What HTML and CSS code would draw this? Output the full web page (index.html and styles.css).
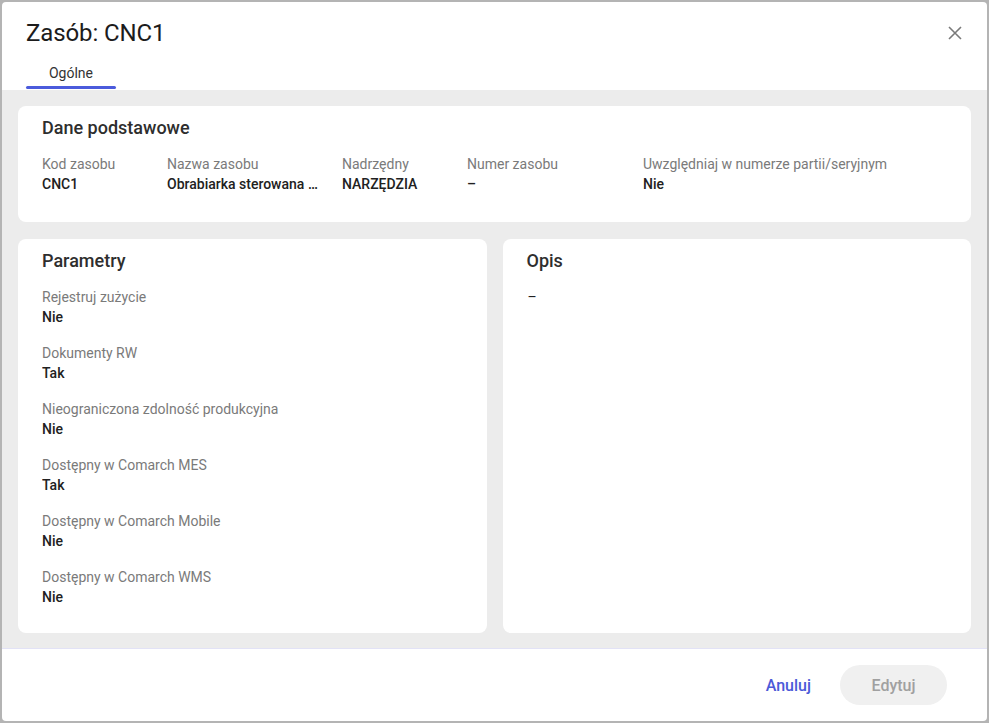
FILE: index.html
```html
<!DOCTYPE html>
<html lang="pl">
<head>
<meta charset="utf-8">
<title>Zasób: CNC1</title>
<link rel="stylesheet" href="styles.css">
</head>
<body>
<div class="dialog">
  <header class="header">
    <div class="title-row">
      <h1 class="title">Zasób: CNC1</h1>
      <button class="close" aria-label="Zamknij">
        <svg width="14" height="14" viewBox="0 0 14 14"><path d="M1 1 L13 13 M13 1 L1 13" stroke="#7a7a7a" stroke-width="1.6" fill="none"/></svg>
      </button>
    </div>
    <div class="tabs">
      <div class="tab active">Ogólne</div>
    </div>
  </header>
  <main class="content">
    <section class="card card-basic">
      <h2 class="card-title">Dane podstawowe</h2>
      <div class="fields">
        <div class="field w1"><div class="label">Kod zasobu</div><div class="value">CNC1</div></div>
        <div class="field w2"><div class="label">Nazwa zasobu</div><div class="value truncated">Obrabiarka sterowana numerycznie</div></div>
        <div class="field w1"><div class="label">Nadrzędny</div><div class="value">NARZĘDZIA</div></div>
        <div class="field w3"><div class="label">Numer zasobu</div><div class="value">–</div></div>
        <div class="field"><div class="label">Uwzględniaj w numerze partii/seryjnym</div><div class="value">Nie</div></div>
      </div>
    </section>
    <div class="row">
      <section class="card">
        <h2 class="card-title">Parametry</h2>
        <div class="list">
          <div class="item"><div class="label">Rejestruj zużycie</div><div class="value">Nie</div></div>
          <div class="item"><div class="label">Dokumenty RW</div><div class="value">Tak</div></div>
          <div class="item"><div class="label">Nieograniczona zdolność produkcyjna</div><div class="value">Nie</div></div>
          <div class="item"><div class="label">Dostępny w Comarch MES</div><div class="value">Tak</div></div>
          <div class="item"><div class="label">Dostępny w Comarch Mobile</div><div class="value">Nie</div></div>
          <div class="item"><div class="label">Dostępny w Comarch WMS</div><div class="value">Nie</div></div>
        </div>
      </section>
      <section class="card">
        <h2 class="card-title">Opis</h2>
        <div class="list">
          <div class="value plain">–</div>
        </div>
      </section>
    </div>
  </main>
  <footer class="footer">
    <button class="btn btn-text">Anuluj</button>
    <button class="btn btn-disabled">Edytuj</button>
  </footer>
</div>
</body>
</html>
```

FILE: styles.css
```css
* { box-sizing: border-box; }
html, body { margin: 0; padding: 0; }
body {
  background: #b4b4b4;
  padding: 2px;
  font-family: Roboto, "Liberation Sans", Arial, sans-serif;
  color: #212121;
}
.dialog {
  width: 985px;
  height: 719px;
  background: #fff;
  border-radius: 4px;
  display: flex;
  flex-direction: column;
  overflow: hidden;
}
.header { padding: 15px 20px 0 24px; }
.title-row {
  display: flex;
  align-items: center;
  justify-content: space-between;
  height: 32px;
}
.title {
  margin: 0;
  font-size: 24px;
  font-weight: 400;
  line-height: 32px;
  color: #1c1c1c;
  letter-spacing: -0.1px;
}
.close {
  width: 24px;
  height: 24px;
  padding: 0;
  border: 0;
  background: none;
  display: flex;
  align-items: center;
  justify-content: center;
  cursor: pointer;
}
.tabs { display: flex; }
.tab {
  width: 90px;
  padding-top: 14px;
  text-align: center;
  font-size: 14px;
  line-height: 20px;
  color: #333;
}
.tab.active::after {
  content: "";
  display: block;
  height: 3px;
  margin-top: 3px;
  margin-bottom: 1px;
  border-radius: 2px;
  background: #4b5bdc;
}
.content {
  flex: 1;
  background: #ececec;
  padding: 16px 16px 15px;
  display: flex;
  flex-direction: column;
  gap: 17px;
  border-bottom: 1px solid #e2e2f6;
}
.card {
  background: #fff;
  border-radius: 8px;
  padding: 10px 24px 24px;
}
.card-basic { height: 116px; }
.card-title {
  margin: 0;
  font-size: 18px;
  font-weight: 500;
  line-height: 24px;
  color: #2e2e2e;
}
.fields {
  display: flex;
  gap: 16px;
  margin-top: 14px;
}
.field { min-width: 0; flex: none; }
.w1 { width: 109px; }
.w2 { width: 159px; }
.w3 { width: 160px; }
.label {
  font-size: 14px;
  line-height: 20px;
  color: #7a7a7a;
  white-space: nowrap;
}
.value {
  font-size: 14px;
  line-height: 20px;
  font-weight: 500;
  color: #212121;
  white-space: nowrap;
  overflow: hidden;
  text-overflow: ellipsis;
}
.value.truncated { max-width: 153px; }
.value.plain { font-weight: 400; padding-left: 1px; }
.row {
  flex: 1;
  display: grid;
  grid-template-columns: 1fr 1fr;
  gap: 16px;
}
.list {
  margin-top: 14px;
  display: flex;
  flex-direction: column;
  gap: 16px;
}
.footer {
  height: 72px;
  display: flex;
  align-items: center;
  justify-content: flex-end;
  padding-right: 40px;
  gap: 13px;
}
.btn {
  height: 40px;
  border: 0;
  border-radius: 20px;
  font-family: inherit;
  font-size: 16px;
  font-weight: 500;
  background: none;
}
.btn-text {
  padding: 0 16px;
  color: #4b5ad8;
}
.btn-disabled {
  width: 107px;
  background: #f0f0f0;
  color: #a0a0a0;
}
```
